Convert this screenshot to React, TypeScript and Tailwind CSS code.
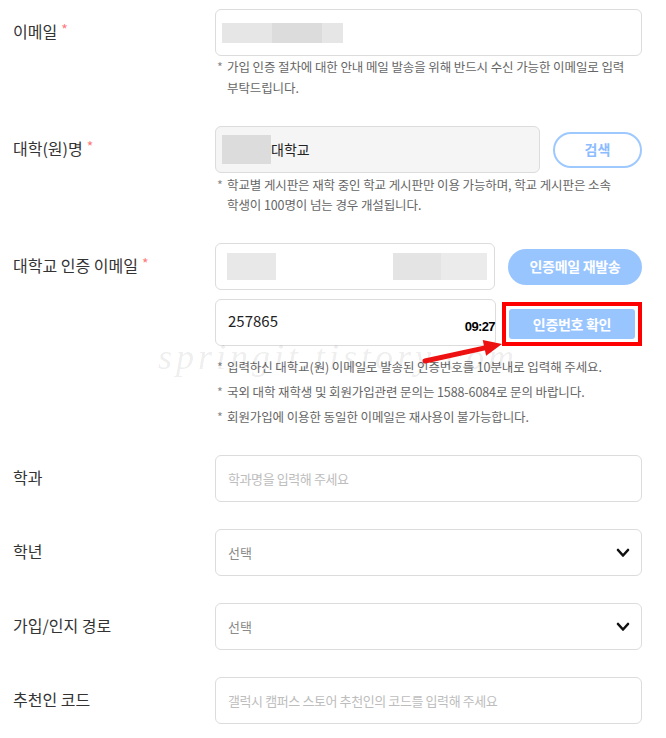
import React from 'react';

const FONT = "font-['Noto_Sans_CJK_KR','Noto_Sans',sans-serif]";

interface RowProps {
  label: string;
  required?: boolean;
  className?: string;
  children: React.ReactNode;
}

const Row: React.FC<RowProps> = ({ label, required, className = '', children }) => (
  <div className={`flex ${className}`}>
    <div className="w-[215px] shrink-0 pl-[13px] h-[47px] flex items-center pb-[3px] text-[16px] text-[#333]">
      {label}
      {required && <span className="ml-[4px] text-[14px] text-[#ff7a7a] -mt-[3px]">*</span>}
    </div>
    <div className="w-[427px]">{children}</div>
  </div>
);

const Note: React.FC<{ children: React.ReactNode; className?: string }> = ({ children, className = '' }) => (
  <div className={`flex text-[12.5px] text-[#666] tracking-[-0.1px] ${className}`}>
    <span className="w-[12px] shrink-0 pl-[2px] text-[#888]">*</span>
    <p>{children}</p>
  </div>
);

const Chevron = () => (
  <svg width="14" height="10" viewBox="0 0 14 10" className="shrink-0">
    <polyline points="2,2 7,7.5 12,2" fill="none" stroke="#111" strokeWidth="2.6" strokeLinecap="round" strokeLinejoin="round" />
  </svg>
);

const SelectBox = () => (
  <div className="h-[47px] rounded-[6px] border border-[#dcdcdc] flex items-center justify-between pl-[12px] pr-[11px] text-[13px] text-[#8a8a8a]">
    <span>선택</span>
    <Chevron />
  </div>
);

export default function App() {
  return (
    <div className={`relative w-[666px] h-[738px] bg-white overflow-hidden ${FONT}`}>
      {/* 이메일 */}
      <Row label="이메일" required className="pt-[9px]">
        <div className="h-[47px] rounded-[6px] border border-[#dcdcdc] flex items-center pl-[6px]">
          <div className="w-[50px] h-[20px] bg-[#e6e6e6]" />
          <div className="w-[50px] h-[20px] bg-[#dcdcdc]" />
          <div className="w-[21px] h-[20px] bg-[#e6e6e6]" />
        </div>
        <Note className="mt-[0px] leading-[21px]">
          가입 인증 절차에 대한 안내 메일 발송을 위해 반드시 수신 가능한 이메일로 입력
          <br />
          부탁드립니다.
        </Note>
      </Row>

      {/* 대학(원)명 */}
      <Row label="대학(원)명" required className="mt-[28px]">
        <div className="flex items-center">
          <div className="w-[325px] h-[47px] rounded-[6px] border border-[#dcdcdc] bg-[#f5f5f5] flex items-center pl-[6px] text-[14px] text-[#222]">
            <div className="w-[49px] h-[29px] bg-[#dcdcdc]" />
            <span>대학교</span>
          </div>
          <button className="ml-[13px] w-[89px] h-[36px] rounded-full border-2 border-[#9ec9ff] text-[#8cbcff] text-[14px] font-bold">
            검색
          </button>
        </div>
        <Note className="mt-[2px] leading-[20px]">
          학교별 게시판은 재학 중인 학교 게시판만 이용 가능하며, 학교 게시판은 소속
          <br />
          학생이 100명이 넘는 경우 개설됩니다.
        </Note>
      </Row>

      {/* 대학교 인증 이메일 */}
      <Row label="대학교 인증 이메일" required className="mt-[28px]">
        <div className="flex items-center">
          <div className="w-[280px] h-[47px] rounded-[6px] border border-[#dcdcdc] flex items-center pl-[11px]">
            <div className="w-[49px] h-[27px] bg-[#e8e8e8]" />
            <div className="ml-[117px] w-[48px] h-[27px] bg-[#e4e4e4]" />
            <div className="w-[46px] h-[27px] bg-[#ebebeb]" />
          </div>
          <button className="ml-[13px] w-[134px] h-[36px] rounded-full bg-[#99c5ff] text-white text-[14px] font-bold tracking-[-0.3px]">
            인증메일 재발송
          </button>
        </div>
        <div className="flex items-end mt-[9px]">
          <div className="relative w-[281px] h-[47px] rounded-[6px] border border-[#dcdcdc] flex items-center pl-[12px] pb-[2px] text-[15px] text-[#222]">
            257865
            <span className="absolute right-[0px] bottom-[9px] font-['Liberation_Sans',sans-serif] text-[13px] font-bold text-black tracking-[-0.6px]">
              09:27
            </span>
          </div>
          <div className="ml-[6px] w-[140px] h-[44px] border-4 border-[#ff0000] p-[3px]">
            <button className="w-full h-full rounded-[3px] bg-[#99c5ff] text-white text-[14px] font-bold tracking-[-0.3px]">
              인증번호 확인
            </button>
          </div>
        </div>
        <div className="mt-[8px] flex flex-col">
          <Note className="leading-[25px]">입력하신 대학교(원) 이메일로 발송된 인증번호를 10분내로 입력해 주세요.</Note>
          <Note className="leading-[25px]">국외 대학 재학생 및 회원가입관련 문의는 1588-6084로 문의 바랍니다.</Note>
          <Note className="leading-[25px]">회원가입에 이용한 동일한 이메일은 재사용이 불가능합니다.</Note>
        </div>
      </Row>

      {/* 학과 */}
      <Row label="학과" className="mt-[26px]">
        <input
          className="w-full h-[47px] rounded-[6px] border border-[#dcdcdc] pl-[12px] text-[13px] tracking-[-0.4px] outline-none placeholder:text-[#bdbdbd]"
          placeholder="학과명을 입력해 주세요"
        />
      </Row>

      {/* 학년 */}
      <Row label="학년" className="mt-[27px]">
        <SelectBox />
      </Row>

      {/* 가입/인지 경로 */}
      <Row label="가입/인지 경로" className="mt-[27px]">
        <SelectBox />
      </Row>

      {/* 추천인 코드 */}
      <Row label="추천인 코드" className="mt-[27px]">
        <input
          className="w-full h-[47px] rounded-[6px] border border-[#dcdcdc] pl-[12px] text-[13px] tracking-[-0.4px] outline-none placeholder:text-[#bdbdbd]"
          placeholder="갤럭시 캠퍼스 스토어 추천인의 코드를 입력해 주세요"
        />
      </Row>

      {/* watermark */}
      <div className="absolute left-[158px] top-[330px] pointer-events-none select-none font-['Liberation_Serif',serif] italic text-[36px] tracking-[4px] text-black/[0.08]">
        springit.tistory.com
      </div>

      {/* annotation arrow */}
      <svg className="absolute left-[420px] top-[330px] pointer-events-none" width="90" height="40" viewBox="0 0 90 40">
        <line x1="5" y1="31" x2="65" y2="17.9" stroke="#ee1111" strokeWidth="5" strokeLinecap="round" />
        <polygon points="82,14 66.1,25.7 62.7,10.1" fill="#ee1111" />
      </svg>
    </div>
  );
}
